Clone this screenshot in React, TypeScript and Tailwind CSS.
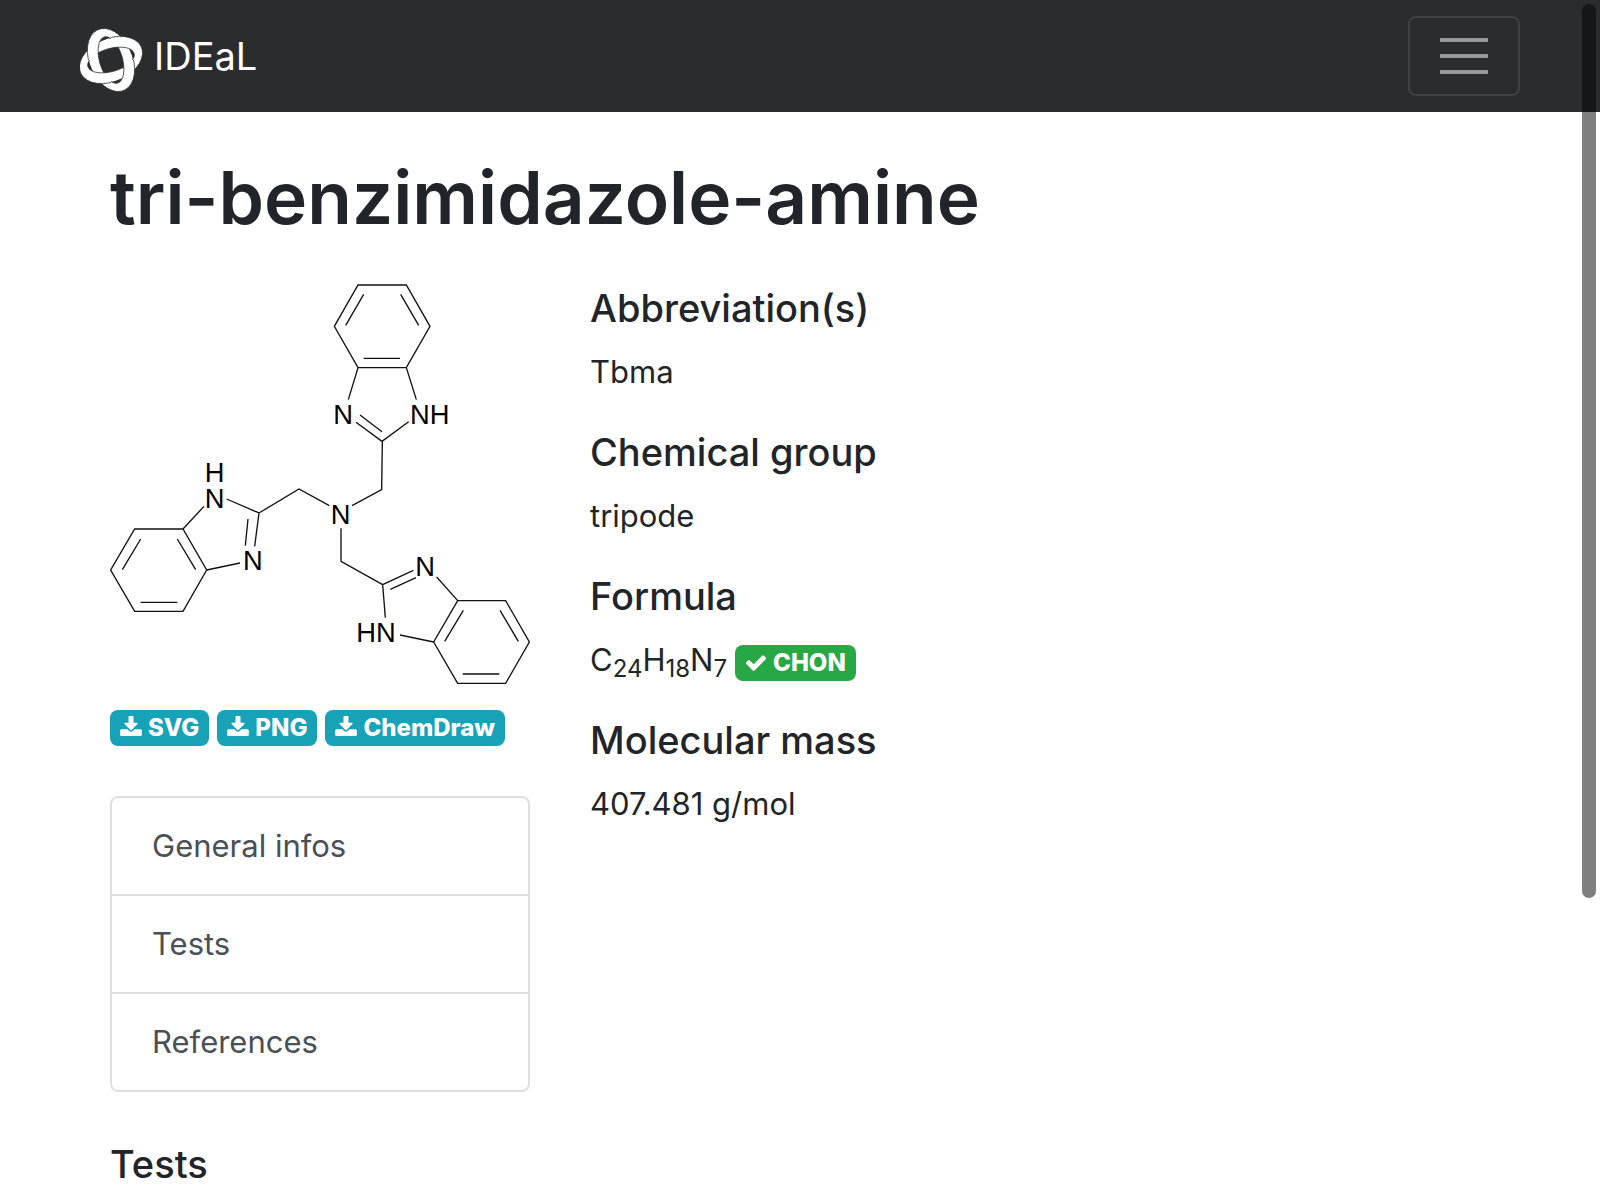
const bonds =
  // top benzimidazole
  "M804 44H949L1020 168L949 292H804L733 168Z M821 72L767 165 M932 72L986 165 M821 264H930 " +
  "M804 292L775 388 M949 292L979 388 M798 456L876 513L956 454 M810 434L876 484 M877 513L875 658L786 706 " +
  // left benzimidazole
  "M134 776H279L350 899L279 1023H134L62 899Z M152 806L97 898 M262 806L317 898 M152 996H262 " +
  "M279 776L342 708 M350 899L450 878 M410 686L507 728L494 828 M474 746L466 826 M507 728L627 656L718 706 " +
  // bottom right benzimidazole
  "M1103 991H1247L1318 1115L1247 1239H1103L1031 1115Z M1120 1020L1064 1113 M1230 1020L1285 1113 M1118 1211H1228 " +
  "M1103 991L1040 920 M1031 1115L930 1094 M886 1042L878 943 M878 943L970 900 M901 957L978 922 M753 774V873L878 943";

const atoms = [
  { x: 730, y: 461, label: "N" },
  { x: 960, y: 461, label: "NH" },
  { x: 344, y: 634, label: "H" },
  { x: 344, y: 713, label: "N" },
  { x: 459, y: 899, label: "N" },
  { x: 722, y: 762, label: "N" },
  { x: 976, y: 917, label: "N" },
  { x: 799, y: 1115, label: "HN" },
];

function Molecule() {
  return (
    <svg viewBox="60 41 1260 1206" className="block w-full" role="img" aria-label="Structure of tri-benzimidazole-amine">
      <path d={bonds} fill="none" stroke="#111" strokeWidth="4" />
      {atoms.map((a) => (
        <text key={`${a.x}-${a.y}`} x={a.x} y={a.y} fontSize="82" fill="#000" fontFamily="'Liberation Sans', sans-serif">
          {a.label}
        </text>
      ))}
    </svg>
  );
}

// One loop of the logo: a tilted ellipse with a narrower, differently tilted hole.
const loop =
  "M17 2.1A33 21.5 67 0 1 45 61.9A33 21.5 67 0 1 17 2.1Z M24.4 8.9A24 11.5 74 0 0 37.6 55.1A24 11.5 74 0 0 24.4 8.9Z";

function Logo() {
  return (
    <svg viewBox="0 0 64 64" className="mt-2 size-16" fill="#fff" stroke="#2b2c2e" strokeWidth="0.8" fillRule="evenodd" aria-hidden="true">
      <clipPath id="weave">
        <path d="M-2 -2H31V32H-2Z M31 32H66V66H31Z" />
      </clipPath>
      <path d={loop} />
      <path d={loop} transform="rotate(90 31 32)" />
      <g clipPath="url(#weave)">
        <path d={loop} />
      </g>
    </svg>
  );
}

function BadgeIcon({ d }: { d: string }) {
  return (
    <svg viewBox="64 0 1664 1536" className="h-5 w-[22px] self-start" fill="currentColor" aria-hidden="true">
      <path d={d} />
    </svg>
  );
}

const downloadPath =
  "M1344 1344q0 26-19 45t-45 19-45-19-19-45 19-45 45-19 45 19 19 45zm256 0q0 26-19 45t-45 19-45-19-19-45 19-45 45-19 45 19 19 45zm128-224v320q0 40-28 68t-68 28h-1472q-40 0-68-28t-28-68v-320q0-40 28-68t68-28h465l135 136q58 56 136 56t136-56l136-136h464q40 0 68 28t28 68zm-325-569q17 41-14 70l-448 448q-18 19-45 19t-45-19l-448-448q-31-29-14-70 17-39 59-39h256v-448q0-26 19-45t45-19h256q26 0 45 19t19 45v448h256q42 0 59 39z";
const checkPath =
  "M1671 566q0 40-28 68l-724 724-136 136q-28 28-68 28t-68-28l-136-136-362-362q-28-28-28-68t28-68l136-136q28-28 68-28t68 28l294 295 656-657q28-28 68-28t68 28l136 136q28 28 28 68z";

const badge = "inline-flex gap-1.5 rounded-lg px-2.5 py-1.5 text-[24px] leading-6 font-extrabold text-white";

const downloads = ["SVG", "PNG", "ChemDraw"];
const sections = ["General infos", "Tests", "References"];

function Sub({ children }: { children: string }) {
  return <sub className="bottom-[-6px] text-[24px] leading-none">{children}</sub>;
}

const facts = [
  { title: "Abbreviation(s)", value: <>Tbma</> },
  { title: "Chemical group", value: <>tripode</> },
  {
    title: "Formula",
    value: (
      <>
        <span>
          C<Sub>24</Sub>H<Sub>18</Sub>N<Sub>7</Sub>
        </span>
        <span className={`${badge} bg-[#28a745]`}>
          <BadgeIcon d={checkPath} />
          <span className="self-baseline">CHON</span>
        </span>
      </>
    ),
  },
  { title: "Molecular mass", value: <>407.481 g/mol</> },
];

export default function App() {
  return (
    <div className="min-h-screen bg-white font-['Inter',sans-serif] text-[31px] leading-[48px] text-[#212529]">
      <header className="flex items-center justify-between bg-[#2b2c2e] px-20 py-4">
        <a href="#" className="flex items-center gap-2.5 text-[38px] text-white">
          <Logo />
          IDEaL
        </a>
        <button
          type="button"
          aria-label="Toggle navigation"
          className="flex h-20 w-28 flex-col items-center justify-center gap-3 rounded-lg border-2 border-white/10"
        >
          <span className="h-1 w-12 bg-white/50" />
          <span className="h-1 w-12 bg-white/50" />
          <span className="h-1 w-12 bg-white/50" />
        </button>
      </header>

      <main className="px-[110px] pt-[38px]">
        <h1 className="mb-[38px] text-[73px] leading-[96px] font-semibold">tri-benzimidazole-amine</h1>
        <div className="grid grid-cols-3 gap-[60px]">
          <div>
            <Molecule />
            <div className="mt-6 flex gap-2">
              {downloads.map((d) => (
                <a key={d} href="#" className={`${badge} bg-[#17a2b8]`}>
                  <BadgeIcon d={downloadPath} />
                  <span className="self-baseline">{d}</span>
                </a>
              ))}
            </div>
            <nav className="mt-[50px] divide-y-2 divide-[#dfdfdf] rounded-lg border-2 border-[#dfdfdf]">
              {sections.map((s) => (
                <a key={s} href="#" className="block px-10 py-6 text-[#495057]">
                  {s}
                </a>
              ))}
            </nav>
          </div>
          <div className="col-span-2">
            {facts.map((f) => (
              <section key={f.title} className="mb-8">
                <h2 className="mb-4 text-[38px] font-medium">{f.title}</h2>
                <div className="flex items-baseline gap-2">{f.value}</div>
              </section>
            ))}
          </div>
        </div>
        <h2 className="mt-12 text-[38px] font-medium">Tests</h2>
      </main>

      <div className="fixed top-1 right-1 h-[894px] w-3.5 rounded-full bg-black/50" />
    </div>
  );
}
